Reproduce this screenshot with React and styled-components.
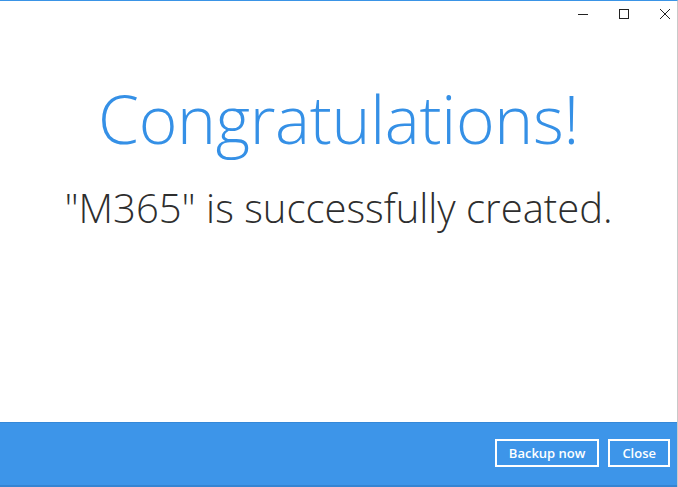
import React from 'react';
import styled, { createGlobalStyle } from 'styled-components';

const GlobalStyle = createGlobalStyle`
  html, body { margin: 0; padding: 0; background: #fff; }
  body { font-family: 'Open Sans', 'Liberation Sans', sans-serif; }
`;

const Window = styled.div`
  width: 678px;
  height: 487px;
  box-sizing: border-box;
  border-top: 1px solid #3a94e6;
  border-right: 1px solid #c9c9c9;
  display: flex;
  flex-direction: column;
  background: #fff;
`;

const TitleBar = styled.div`
  height: 28px;
  display: flex;
  justify-content: flex-end;
  align-items: center;
  gap: 19px;
  padding-right: 1px;
`;

const WinButton = styled.div`
  width: 22px;
  height: 28px;
  display: flex;
  align-items: center;
  justify-content: center;
  margin-top: -2px;
`;

const Content = styled.div`
  flex: 1;
  display: flex;
  flex-direction: column;
  align-items: center;
  padding-top: 49px;
`;

const Title = styled.h1`
  margin: 0;
  font-family: 'Open Sans', sans-serif;
  font-weight: 300;
  font-size: 66px;
  line-height: 80px;
  color: #3590e6;
  letter-spacing: -0.3px;
`;

const Message = styled.p`
  margin: 27px 0 0;
  font-family: 'Open Sans', sans-serif;
  font-weight: 300;
  font-size: 40px;
  line-height: 46px;
  color: #2e2e2e;
`;

const Footer = styled.div`
  height: 65px;
  box-sizing: border-box;
  background: #3d95e9;
  border-top: 1px solid #3588d8;
  border-bottom: 2px solid #3584d2;
  display: flex;
  justify-content: flex-end;
  align-items: center;
  gap: 9px;
  padding: 0 7px 2px 0;
`;

const Button = styled.button`
  height: 28px;
  padding: 0 ${({ pad }) => pad || 12}px;
  background: transparent;
  border: 2px solid #fff;
  color: #fff;
  font-family: 'Open Sans', sans-serif;
  font-weight: 600;
  font-size: 13px;
  cursor: pointer;
`;

const App = () => (
  <>
    <GlobalStyle />
    <Window>
      <TitleBar>
        <WinButton>
          <svg width="12" height="12" viewBox="0 0 12 12">
            <path d="M1 6.5h10" stroke="#222" strokeWidth="1" />
          </svg>
        </WinButton>
        <WinButton>
          <svg width="12" height="12" viewBox="0 0 12 12">
            <rect x="1.5" y="1.5" width="9" height="9" fill="none" stroke="#222" strokeWidth="1" />
          </svg>
        </WinButton>
        <WinButton>
          <svg width="12" height="12" viewBox="0 0 12 12">
            <path d="M1 1l10 10M11 1L1 11" stroke="#222" strokeWidth="1" />
          </svg>
        </WinButton>
      </TitleBar>
      <Content>
        <Title>Congratulations!</Title>
        <Message>"M365" is successfully created.</Message>
      </Content>
      <Footer>
        <Button pad={12}>Backup now</Button>
        <Button pad={12}>Close</Button>
      </Footer>
    </Window>
  </>
);

export default App;
